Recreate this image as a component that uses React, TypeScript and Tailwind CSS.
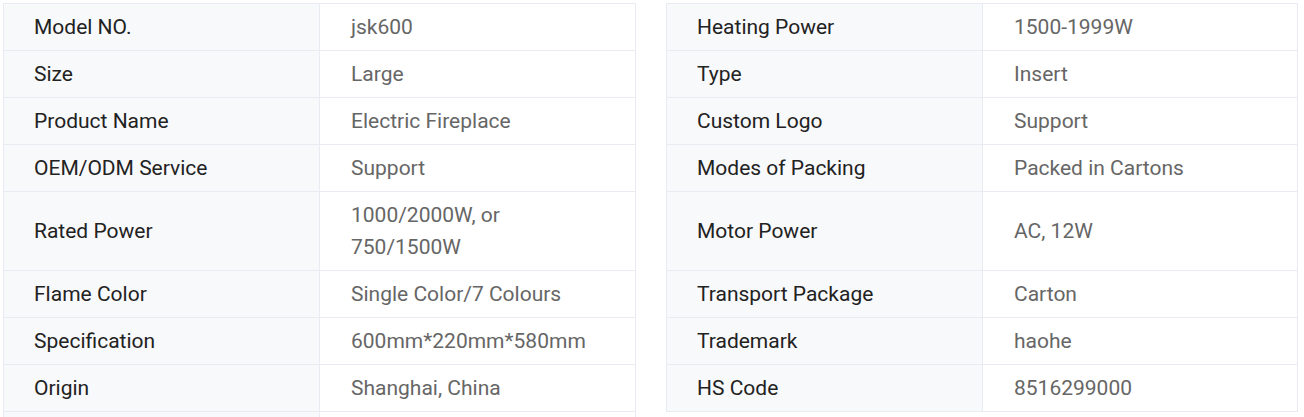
type Pair = [string, string];

const rows: { left: Pair; right?: Pair }[] = [
  { left: ["Model NO.", "jsk600"], right: ["Heating Power", "1500-1999W"] },
  { left: ["Size", "Large"], right: ["Type", "Insert"] },
  { left: ["Product Name", "Electric Fireplace"], right: ["Custom Logo", "Support"] },
  { left: ["OEM/ODM Service", "Support"], right: ["Modes of Packing", "Packed in Cartons"] },
  { left: ["Rated Power", "1000/2000W, or 750/1500W"], right: ["Motor Power", "AC, 12W"] },
  { left: ["Flame Color", "Single Color/7 Colours"], right: ["Transport Package", "Carton"] },
  { left: ["Specification", "600mm*220mm*580mm"], right: ["Trademark", "haohe"] },
  { left: ["Origin", "Shanghai, China"], right: ["HS Code", "8516299000"] },
  { left: ["", ""] },
];

function PairCell({ pair, first }: { pair: Pair; first: boolean }) {
  return (
    <div
      className={`grid grid-cols-[316px_1fr] border-l border-r border-b border-[#e8ecf2] ${
        first ? "border-t" : ""
      }`}>
      <div className="flex items-center bg-[#f8f9fb] border-r border-[#e8ecf2] pl-[30px] pr-4 py-[7px] min-h-[46px] text-[#222]">
        {pair[0]}
      </div>
      <div className="flex items-center bg-white pl-[31px] pr-[30px] py-[7px] min-h-[46px] text-[#666]">
        {pair[1]}
      </div>
    </div>
  );
}

export default function App() {
  return (
    <div
      className="grid grid-cols-[633px_632px] gap-x-[30px] pt-[3px] pl-[3px] bg-white text-[21px] leading-[32px]"
      style={{ fontFamily: "Roboto, 'Liberation Sans', sans-serif" }}>
      {rows.map((row, idx) => (
        <div key={idx} className="contents">
          <PairCell pair={row.left} first={idx === 0} />
          {row.right ? <PairCell pair={row.right} first={idx === 0} /> : <div />}
        </div>
      ))}
    </div>
  );
}
